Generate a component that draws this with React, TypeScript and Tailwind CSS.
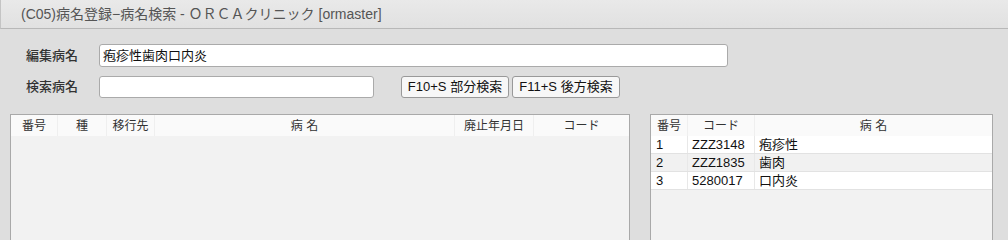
const LEFT_COLS = [
  { label: '番号', w: 'w-[47px]' },
  { label: '種', w: 'w-[49px]' },
  { label: '移行先', w: 'w-[48px]' },
  { label: '病 名', w: 'w-[300px]' },
  { label: '廃止年月日', w: 'w-[79px]' },
  { label: 'コード', w: 'flex-1' }
]

const RESULTS = [
  { no: '1', code: 'ZZZ3148', name: '疱疹性' },
  { no: '2', code: 'ZZZ1835', name: '歯肉' },
  { no: '3', code: '5280017', name: '口内炎' }
]

const font = "font-['Liberation_Sans','Noto_Sans_CJK_JP',sans-serif]"

export default function App() {
  return (
    <div className={`${font} w-[1008px] h-[240px] overflow-hidden bg-[#dedede] text-[#222]`}>
      {/* タイトルバー */}
      <div className="h-[29px] flex items-center pl-[20px] border-b border-[#b8b8b8] border-l border-l-[#c4c4c4] bg-gradient-to-b from-[#e9e9e9] to-[#e1e1e1] text-[14px] text-[#555]">
        (C05)病名登録−病名検索 - ＯＲＣＡクリニック [ormaster]
      </div>

      <div className="pt-[15px] flex flex-col gap-[9px]">
        <div className="flex items-center pl-[26px]">
          <span className="w-[73px] text-[13px] font-medium text-[#333]">編集病名</span>
          <div className="w-[629px] h-[23px] bg-white border border-[#aaa] rounded-[3px] flex items-center pl-[3px] text-[13px] text-[#111]">
            疱疹性歯肉口内炎
          </div>
        </div>
        <div className="flex items-center pl-[26px]">
          <span className="w-[73px] text-[13px] font-medium text-[#333]">検索病名</span>
          <div className="w-[275px] h-[22px] bg-white border border-[#aaa] rounded-[3px]" />
          <button className="ml-[27px] w-[108px] h-[22px] bg-[#f7f7f7] border border-[#999] rounded-[3px] text-[13px] text-[#111] flex items-center justify-center">
            F10+S 部分検索
          </button>
          <button className="ml-[3px] w-[108px] h-[22px] bg-[#f7f7f7] border border-[#999] rounded-[3px] text-[13px] text-[#111] flex items-center justify-center">
            F11+S 後方検索
          </button>
        </div>
      </div>

      <div className="flex mt-[16px]">
        {/* 既存病名一覧 */}
        <div className="ml-[10px] w-[620px] h-[160px] border border-[#a9a9a9] bg-[#f2f2f2]">
          <div className="flex h-[21px] bg-[#fafafa]">
            {LEFT_COLS.map(c => (
              <div
                key={c.label}
                className={`${c.w} border-r border-[#efefef] last:border-r-0 flex items-center justify-center text-[12px] text-[#333]`}
              >
                {c.label}
              </div>
            ))}
          </div>
        </div>

        {/* 検索結果 */}
        <div className="ml-[20px] w-[343px] h-[160px] border border-[#a9a9a9] bg-[#f2f2f2]">
          <div className="flex h-[21px] bg-[#fafafa] text-[12px] text-[#333]">
            <div className="w-[37px] border-r border-[#efefef] flex items-center justify-center">番号</div>
            <div className="w-[67px] border-r border-[#efefef] flex items-center justify-center">コード</div>
            <div className="flex-1 flex items-center justify-center">病 名</div>
          </div>
          {RESULTS.map((r, i) => (
            <div
              key={r.no}
              className={`flex h-[18px] border-b border-[#e2e2e2] text-[13px] text-[#111] ${i % 2 === 1 ? 'bg-[#f1f1f1]' : 'bg-white'}`}
            >
              <div className="w-[37px] border-r border-[#e8e8e8] pl-[5px] flex items-center">{r.no}</div>
              <div className="w-[67px] border-r border-[#e8e8e8] pl-[4px] flex items-center">{r.code}</div>
              <div className="flex-1 pl-[4px] flex items-center">{r.name}</div>
            </div>
          ))}
        </div>
      </div>
    </div>
  )
}
